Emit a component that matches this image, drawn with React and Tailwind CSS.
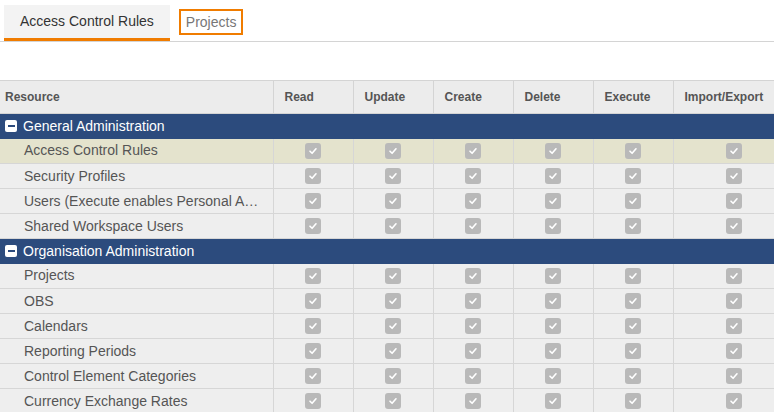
import { Fragment } from "react";

const columns = ["Read", "Update", "Create", "Delete", "Execute", "Import/Export"];

const groups = [
  {
    title: "General Administration",
    rows: [
      "Access Control Rules",
      "Security Profiles",
      "Users (Execute enables Personal Access Tokens)",
      "Shared Workspace Users",
    ],
  },
  {
    title: "Organisation Administration",
    rows: [
      "Projects",
      "OBS",
      "Calendars",
      "Reporting Periods",
      "Control Element Categories",
      "Currency Exchange Rates",
    ],
  },
];

function Check() {
  return (
    <span className="inline-flex h-4 w-4 items-center justify-center rounded-[3px] bg-[#b9b9b9]">
      <svg width="10" height="10" viewBox="0 0 10 10" fill="none">
        <path d="M2 5.2 L4.1 7.3 L8 2.8" stroke="white" strokeWidth="1.6" strokeLinecap="round" strokeLinejoin="round" />
      </svg>
    </span>
  );
}

function App() {
  return (
    <div className="min-h-screen overflow-hidden bg-white font-['Liberation_Sans',Arial,sans-serif]">
      {/* tabs */}
      <div className="flex items-start border-b border-[#d4d4d4] pl-1 pt-[5px]">
        <div className="flex h-[36px] items-center border-b-[3px] border-[#f07c00] bg-[#f3f3f3] px-4 text-[14px] text-[#333]">
          Access Control Rules
        </div>
        <div className="ml-[9px] mt-[4px] flex h-[26px] items-center border-2 border-[#f07c00] px-[5px] text-[14px] text-[#777]">
          Projects
        </div>
      </div>

      <div className="mt-[38px] w-[795px]">
        <table className="w-full table-fixed border-collapse">
          <colgroup>
            <col className="w-[273px]" />
            <col className="w-[80px]" />
            <col className="w-[80px]" />
            <col className="w-[80px]" />
            <col className="w-[80px]" />
            <col className="w-[80px]" />
            <col />
          </colgroup>
          <thead>
            <tr className="h-[33px] border-y border-[#d4d4d4] bg-[#ececec]">
              <th className="px-[5px] text-left text-[12px] font-bold text-[#555]">Resource</th>
              {columns.map((c) => (
                <th key={c} className="border-l border-[#d4d4d4] px-[11px] text-left text-[12px] font-bold text-[#555]">
                  {c}
                </th>
              ))}
            </tr>
          </thead>
          <tbody>
            {groups.map((g) => (
              <Fragment key={g.title}>
                <tr className="h-[25px] bg-[#2c4b7d]">
                  <td colSpan={7} className="px-[5px]">
                    <div className="flex items-center gap-[6px] text-[14px] text-white">
                      <span className="flex h-3 w-3 items-center justify-center rounded-[2px] bg-white">
                        <span className="h-[2px] w-[7px] bg-[#2c4b7d]" />
                      </span>
                      {g.title}
                    </div>
                  </td>
                </tr>
                {g.rows.map((r, i) => (
                  <tr
                    key={r}
                    className={`h-[25px] border-b border-[#d6d6d6] ${
                      g.title === "General Administration" && i === 0 ? "bg-[#e4e3cd]" : "bg-[#eeeeee]"
                    }`}
                  >
                    <td className="truncate pl-6 pr-[10px] text-[14px] text-[#555]">{r}</td>
                    {columns.map((c) => (
                      <td key={c} className="border-l border-[#d6d6d6] text-center">
                        <div className="flex items-center justify-center">
                          <Check />
                        </div>
                      </td>
                    ))}
                  </tr>
                ))}
              </Fragment>
            ))}
          </tbody>
        </table>
      </div>
    </div>
  );
}

export default App;
